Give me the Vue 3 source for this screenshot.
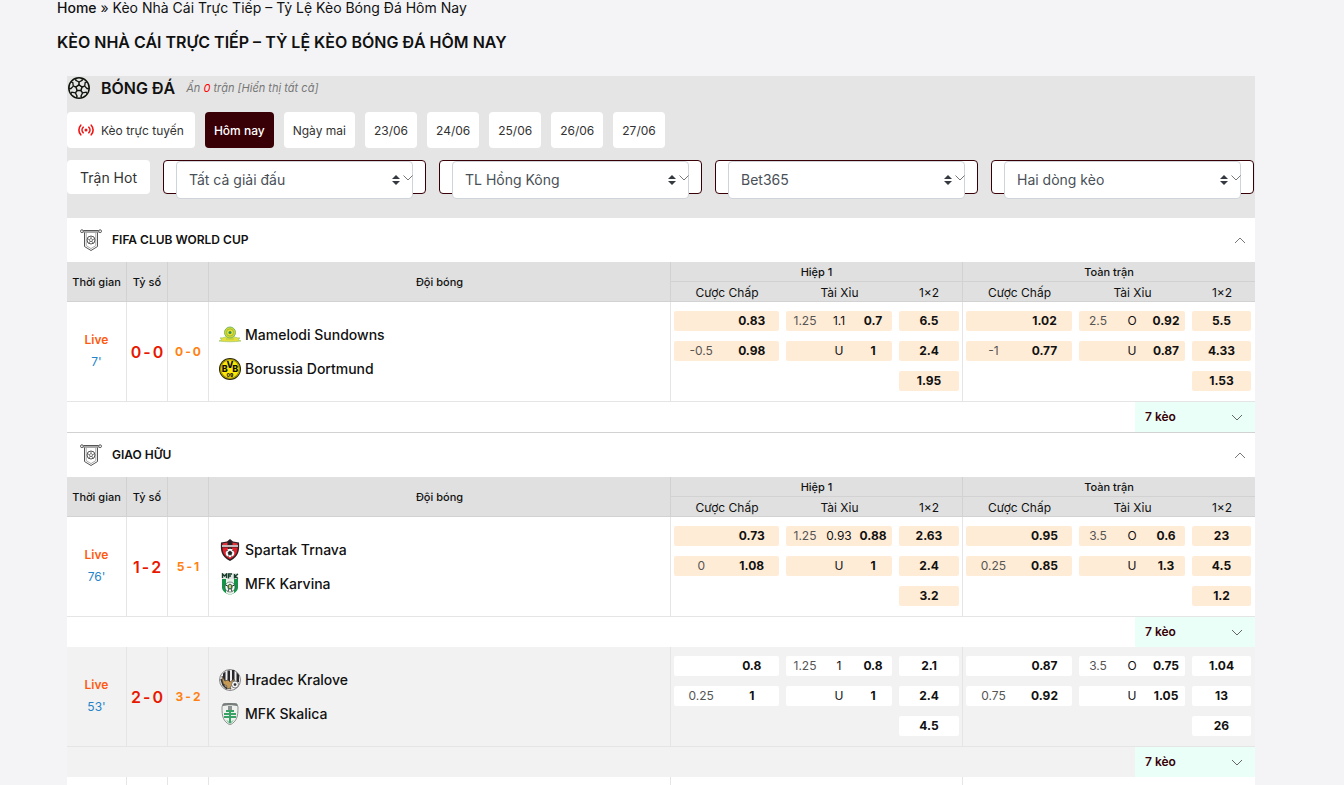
<template>
  <div class="page">
    <nav class="breadcrumb" aria-label="Breadcrumb">
      <a href="#" class="crumb-home">Home</a> » <span>Kèo Nhà Cái Trực Tiếp – Tỷ Lệ Kèo Bóng Đá Hôm Nay</span>
    </nav>
    <h1 class="page-title">KÈO NHÀ CÁI TRỰC TIẾP – TỶ LỆ KÈO BÓNG ĐÁ HÔM NAY</h1>

    <main class="board">
      <div class="toolbar">
        <div class="sport">
          <svg class="sport-icon" viewBox="0 0 24 24" fill="none" stroke="#10150c" stroke-width="1.5">
            <circle cx="12" cy="12" r="10.2" />
            <path d="M12 8.800l3 2.200-1.100 3.600h-3.800L9 11z" />
            <path d="M12 8.800V6M15 11l2.700-.9M13.900 14.600l1.700 2.300M10.100 14.600l-1.700 2.300M9 11l-2.700-.9" />
            <path d="M12 6L8.800 4.400V2.300M12 6l3.200-1.600V2.300M17.700 10.100l.5-3.600 2-.6M17.700 10.100l2.500 2.600 1.800-.5M15.600 16.900l3.600-.7 1.200 1.600M15.600 16.900l-1.700 3.200 1.200 1.700M8.400 16.900l1.700 3.200-1.200 1.700M8.400 16.900l-3.600-.7-1.200 1.600M6.300 10.100l-2.500 2.600-1.800-.5M6.300 10.100l-.5-3.600-2-.6" stroke-width="1.300" />
          </svg>
          <h2 class="sport-name">BÓNG ĐÁ</h2>
          <p class="hidden-note">Ẩn <span class="red">0</span> trận [Hiển thị tất cả]</p>
        </div>

        <div class="days">
          <button
            v-for="day in days"
            :key="day"
            type="button"
            class="day"
            :class="{ 'day-active': day === activeDay, 'day-live': day === days[0] }"
            @click="activeDay = day"
          >
            <svg v-if="day === days[0]" class="live-icon" viewBox="0 0 16 12" fill="none" stroke="#f01414" stroke-width="1.6" stroke-linecap="round">
              <circle cx="8" cy="6" r="1.5" fill="#f01414" stroke="none" />
              <path d="M5.200 3.200a4 4 0 0 0 0 5.600M10.800 3.200a4 4 0 0 1 0 5.600M2.800 1.200a7 7 0 0 0 0 9.600M13.200 1.200a7 7 0 0 1 0 9.600" />
            </svg>
            {{ day }}
          </button>
        </div>

        <div class="filters">
          <button type="button" class="hot">Trận Hot</button>
          <div v-for="filter in filters" :key="filter" class="filter">
            <select class="filter-select" :aria-label="filter">
              <option>{{ filter }}</option>
            </select>
            <svg class="filter-arrows" viewBox="0 0 8 10" fill="#343a40">
              <path d="M4 0l4 4H0zM4 10l4-4H0z" />
            </svg>
            <svg class="filter-chevron" viewBox="0 0 10 6" fill="none" stroke="#777">
              <path d="M.5.5L5 5 9.500 .5" />
            </svg>
          </div>
        </div>
      </div>

      <section v-for="league in leagues" :key="league.name" class="league">
        <header class="league-head">
          <svg class="league-icon" viewBox="0 0 22 22" fill="none" stroke="#555">
            <circle cx="1.900" cy="2.200" r="1.400" />
            <circle cx="20.100" cy="2.200" r="1.400" />
            <path d="M3.300 1.500h15.400M3.300 3h15.400M4.500 3.500v14l6.500 4 6.500-4v-14" />
            <path d="M6.200 4v12.600l4.800 3 4.800-3V4" stroke="#aaa" />
            <circle cx="11" cy="11" r="4" />
            <path d="M11 9.400l1.600 1.200-.6 1.900h-2l-.6-1.900zM11 7.500v1.900M12.600 10.600l2-.8M12 12.500l1.200 1.700M10 12.500l-1.200 1.700M9.400 10.600l-2-.8" stroke-width=".8" />
          </svg>
          <h3 class="league-name">{{ league.name }}</h3>
          <button type="button" class="collapse" aria-label="Thu gọn" @click="league.open = !league.open">
            <svg class="chevron" :class="{ flipped: !league.open }" viewBox="0 0 12 7" fill="none" stroke="#777">
              <path d="M1 6l5-5 5 5" />
            </svg>
          </button>
        </header>

        <table v-if="league.open" class="odds-table">
          <colgroup>
            <col class="col-time">
            <col class="col-score">
            <col class="col-score">
            <col>
            <col class="col-hdp-first">
            <col class="col-odds">
            <col class="col-last-first">
            <col class="col-odds">
            <col class="col-odds">
            <col class="col-last">
          </colgroup>
          <thead>
            <tr>
              <th rowspan="2" class="line low">Thời gian</th>
              <th rowspan="2" class="line low">Tỷ số</th>
              <th rowspan="2" class="line low"></th>
              <th rowspan="2" class="line low">Đội bóng</th>
              <th colspan="3" class="line low group">Hiệp 1</th>
              <th colspan="3" class="low group">Toàn trận</th>
            </tr>
            <tr class="sub-head">
              <th class="low">Cược Chấp</th>
              <th class="low">Tài Xỉu</th>
              <th class="line low">1×2</th>
              <th class="low">Cược Chấp</th>
              <th class="low">Tài Xỉu</th>
              <th class="low">1×2</th>
            </tr>
          </thead>
          <tbody v-for="match in league.matches" :key="match.home" :class="{ alt: match.alt }">
            <tr class="match">
              <td class="line time">
                <div class="live">Live</div>
                <div class="minute">{{ match.minute }}'</div>
              </td>
              <td class="line">
                <div class="score"><span>{{ match.score[0] }}</span><span>-</span><span>{{ match.score[1] }}</span></div>
              </td>
              <td class="line">
                <div class="score corners"><span>{{ match.corners[0] }}</span><span>-</span><span>{{ match.corners[1] }}</span></div>
              </td>
              <td class="line teams">
                <div v-for="team in [match.home, match.away]" :key="team" class="team">
                  <svg v-if="team === 'Mamelodi Sundowns'" class="logo" viewBox="0 0 22 22">
                    <path d="M0 17l3-1.500-2-1.500c4 0 6-1 8-3h4c2 2 4 3 8 3l-2 1.500 3 1.500c-7 1-15 1-22 0z" fill="#e4df3c" stroke="#9cc56c" stroke-width=".7" />
                    <circle cx="11" cy="8.500" r="5.500" fill="#d6d92d" stroke="#79b86a" />
                    <circle cx="11" cy="8.500" r="3.600" fill="#eadf31" stroke="#8cb83c" stroke-width=".8" />
                    <circle cx="11" cy="8.500" r="1.500" fill="#278b62" />
                    <path d="M7 15h8" stroke="#b5c93c" />
                  </svg>
                  <svg v-else-if="team === 'Borussia Dortmund'" class="logo" viewBox="0 0 22 22">
                    <circle cx="11" cy="11" r="11" fill="#2b2705" />
                    <circle cx="11" cy="11" r="10" fill="#fbe70a" />
                    <circle cx="11" cy="11" r="9.300" fill="none" stroke="#2b2705" stroke-width=".5" />
                    <g class="logo-text" fill="#111" text-anchor="middle">
                      <text x="5.700" y="14.200" font-size="9">B</text>
                      <text x="11" y="9.800" font-size="9">V</text>
                      <text x="16.300" y="14.200" font-size="9">B</text>
                      <text x="11" y="19" font-size="5">09</text>
                    </g>
                  </svg>
                  <svg v-else-if="team === 'Spartak Trnava'" class="logo" viewBox="0 0 22 22">
                    <path d="M2 3.500l6-1L11 0l3 2.500 6 1c.5 8 0 14-9 18.500C2 17.500 1.500 11.500 2 3.500z" fill="#2c2225" />
                    <path d="M3.500 8.500h15c0 6-2.500 9-7.500 11.700C6 17.500 3.500 14.500 3.500 8.500z" fill="#e3212c" />
                    <path d="M3.500 4.500l5-1v4h-5zM13.500 3.500l5 1v3h-5z" fill="#e3343c" />
                    <path d="M3 6h16v2H3z" fill="#c8b9ba" />
                    <path d="M9 8.500h4V12H9z" fill="#222" />
                    <circle cx="11" cy="14" r="4.300" fill="#fff" />
                    <path d="M11 12l2 1.500-.8 2.300H9.800L9 13.500zM7 12l1.800-.6M15 12l-1.800-.6M9 18l.5-1.300M13 18l-.5-1.300" fill="#222" stroke="#222" stroke-width=".8" />
                  </svg>
                  <svg v-else-if="team === 'MFK Karvina'" class="logo" viewBox="0 0 22 22">
                    <path d="M3 6h16v8c0 4-3 6-8 8-5-2-8-4-8-8z" fill="#149447" />
                    <path d="M7 6h8v14l-4 2-4-2z" fill="#e9f2e9" />
                    <path d="M3 0h16v6H3z" fill="#dfe5e1" />
                    <path d="M3.500 5V1l2 2 2-2v4M9.500 5.500V1H13M9.500 3H12M15.500 1v4.500M19 1l-3 2.200 3 2.300" fill="none" stroke="#173d2a" stroke-width="1.400" />
                    <circle cx="11" cy="14" r="5" fill="#fff" stroke="#25483a" stroke-width=".6" />
                    <path d="M11 10.500l3 2-1 4h-4l-1-4z" fill="#3c7252" />
                    <path d="M10 12h2v3h-2z" fill="#d4c46a" />
                    <path d="M6.500 12l1.500.7M15.500 12l-1.500.7M9 18.500l.5-2M13 18.500l-.5-2" stroke="#222" />
                  </svg>
                  <svg v-else-if="team === 'Hradec Kralove'" class="logo" viewBox="0 0 22 22">
                    <circle cx="11" cy="11" r="10.500" fill="#eee" stroke="#888" />
                    <path d="M4 4.500l2.500-2V16L4 17zM8.500 1.500H11V13H8.500zM13 1h2.500v12H13zM17.500 3L20 6v7h-2.500z" fill="#29272b" />
                    <path d="M3 7l3 5 3-1 2 2 4-3c0 5-2 7-4 8l1 2-5-1 1-2-4-2z" fill="#c69a54" stroke="#4b4034" stroke-width=".7" />
                    <circle cx="16" cy="15.500" r="3.500" fill="#f5f5f5" stroke="#555" stroke-width=".7" />
                    <path d="M16 14l1.500 1-.5 1.700h-2l-.5-1.700z" fill="#333" />
                    <path d="M2 10l2 6 4 4" fill="none" stroke="#333" stroke-width="1.500" />
                  </svg>
                  <svg v-else class="logo" viewBox="0 0 22 22">
                    <path d="M4 1c4-1.200 10-1.200 14 0l1 3c0 10-1 14-8 18C4 18 3 14 3 4z" fill="#eef1ee" stroke="#8b918e" />
                    <path d="M4 1c4-1.200 10-1.200 14 0v2c-4-1-10-1-14 0z" fill="#777d7b" />
                    <path d="M11 5v15M7 8h8M5 11h12M5 14h12" stroke="#3aa267" stroke-width="2" />
                    <path d="M8 17.500l3 3 3-3" fill="none" stroke="#55aa78" />
                    <path d="M9 3h4v4H9z" fill="#8c9390" />
                  </svg>
                  <span>{{ team }}</span>
                </div>
              </td>
              <template v-for="(half, i) in [match.first, match.full]" :key="i">
                <td class="odds">
                  <div v-for="(row, r) in half.handicap" :key="r" class="chip">
                    <span class="ratio">{{ row[0] }}</span>
                    <b>{{ row[1] }}</b>
                  </div>
                </td>
                <td class="odds">
                  <div v-for="(row, r) in half.total" :key="r" class="chip">
                    <span class="ratio">{{ row[0] }}</span>
                    <span>{{ row[1] }}</span>
                    <b>{{ row[2] }}</b>
                  </div>
                </td>
                <td class="odds" :class="{ 'line odds-end': i === 0 }">
                  <div v-for="(value, r) in half.win" :key="r" class="chip">
                    <b>{{ value }}</b>
                  </div>
                </td>
              </template>
            </tr>
            <tr>
              <td colspan="10">
                <button type="button" class="more">
                  7 kèo
                  <svg class="chevron flipped" viewBox="0 0 12 7" fill="none" stroke="#666">
                    <path d="M1 6l5-5 5 5" />
                  </svg>
                </button>
              </td>
            </tr>
          </tbody>
          <tbody v-if="league.hasNext">
            <tr class="next-row">
              <td class="line"></td>
              <td class="line"></td>
              <td class="line"></td>
              <td class="line"></td>
              <td colspan="3" class="line"></td>
              <td colspan="3"></td>
            </tr>
          </tbody>
        </table>
      </section>
    </main>
  </div>
</template>

<script setup>
import { ref } from 'vue'

const days = ['Kèo trực tuyến', 'Hôm nay', 'Ngày mai', '23/06', '24/06', '25/06', '26/06', '27/06']
const activeDay = ref('Hôm nay')

const filters = ['Tất cả giải đấu', 'TL Hồng Kông', 'Bet365', 'Hai dòng kèo']

const leagues = ref([
  {
    name: 'FIFA CLUB WORLD CUP',
    open: true,
    matches: [
      {
        minute: 7,
        score: [0, 0],
        corners: [0, 0],
        home: 'Mamelodi Sundowns',
        away: 'Borussia Dortmund',
        first: {
          handicap: [['', '0.83'], ['-0.5', '0.98']],
          total: [['1.25', '1.1', '0.7'], ['', 'U', '1']],
          win: ['6.5', '2.4', '1.95']
        },
        full: {
          handicap: [['', '1.02'], ['-1', '0.77']],
          total: [['2.5', 'O', '0.92'], ['', 'U', '0.87']],
          win: ['5.5', '4.33', '1.53']
        }
      }
    ]
  },
  {
    name: 'GIAO HỮU',
    open: true,
    hasNext: true,
    matches: [
      {
        minute: 76,
        score: [1, 2],
        corners: [5, 1],
        home: 'Spartak Trnava',
        away: 'MFK Karvina',
        first: {
          handicap: [['', '0.73'], ['0', '1.08']],
          total: [['1.25', '0.93', '0.88'], ['', 'U', '1']],
          win: ['2.63', '2.4', '3.2']
        },
        full: {
          handicap: [['', '0.95'], ['0.25', '0.85']],
          total: [['3.5', 'O', '0.6'], ['', 'U', '1.3']],
          win: ['23', '4.5', '1.2']
        }
      },
      {
        minute: 53,
        alt: true,
        score: [2, 0],
        corners: [3, 2],
        home: 'Hradec Kralove',
        away: 'MFK Skalica',
        first: {
          handicap: [['', '0.8'], ['0.25', '1']],
          total: [['1.25', '1', '0.8'], ['', 'U', '1']],
          win: ['2.1', '2.4', '4.5']
        },
        full: {
          handicap: [['', '0.87'], ['0.75', '0.92']],
          total: [['3.5', 'O', '0.75'], ['', 'U', '1.05']],
          win: ['1.04', '13', '26']
        }
      }
    ]
  }
])
</script>

<style>
body {
  margin: 0;
  background: #f4f4f7;
}
</style>

<style scoped>
.page {
  padding: 0 79px 0 57px;
  font-family: Inter, "Liberation Sans", sans-serif;
  font-size: 14px;
  color: #111;
}

button,
select {
  font-family: inherit;
  cursor: pointer;
}

button {
  border: 0;
  padding: 0;
  background: none;
}

.breadcrumb {
  line-height: 16px;
}

.crumb-home {
  color: inherit;
  font-weight: 500;
  text-decoration: none;
}

.page-title {
  margin: 16px 0 24px;
  font-size: 16px;
  font-weight: 600;
  line-height: 20px;
}

.board {
  margin: 0 10px;
  background: #fff;
}

.toolbar {
  padding-bottom: 24px;
  background: #e5e5e5;
}

.sport {
  display: flex;
  align-items: center;
  height: 24px;
}

.sport-icon {
  width: 24px;
  height: 24px;
}

.sport-name {
  margin: 0 11px 0 10px;
  font-size: 16px;
  font-weight: 600;
}

.hidden-note {
  margin: 0;
  font-size: 11px;
  font-style: italic;
  color: #777;
}

.red {
  color: #f00;
}

.days {
  display: flex;
  gap: 10px;
  margin-top: 12px;
}

.day {
  display: flex;
  align-items: center;
  height: 36px;
  padding: 0 9px;
  border-radius: 4px;
  background: #fff;
  color: #333;
  font-size: 12px;
}

.day-live {
  padding: 0 11px;
}

.day-active {
  background: #380006;
  color: #fff;
  font-weight: 500;
}

.live-icon {
  width: 16px;
  height: 12px;
  margin-right: 7px;
}

.filters {
  display: flex;
  gap: 13px;
  margin-top: 12px;
  padding-right: 1px;
}

.hot {
  height: 34px;
  padding: 0 13px;
  border-radius: 4px;
  background: #fff;
  color: #333;
  font-size: 14px;
}

.filter {
  position: relative;
  flex: 1;
  box-sizing: border-box;
  height: 34px;
  padding: 0 12px;
  border: 1px solid #380006;
  border-radius: 4px;
  background: #fff;
}

.filter-select {
  width: 100%;
  height: 38px;
  padding: 0 12px 2px;
  border: 1px solid #ced4da;
  border-radius: 4px;
  background: #fff;
  color: #495057;
  font-size: 14px;
  appearance: none;
}

.filter-arrows,
.filter-chevron {
  position: absolute;
  pointer-events: none;
}

.filter-arrows {
  top: 14px;
  right: 25px;
  width: 8px;
  height: 10px;
}

.filter-chevron {
  top: 14px;
  right: 12px;
  width: 10px;
  height: 6px;
}

.league + .league {
  border-top: 1px solid #d2d2d2;
}

.league-head {
  display: flex;
  align-items: center;
  height: 44px;
  padding: 0 9px 0 13px;
}

.league-icon {
  width: 22px;
  height: 22px;
}

.league-name {
  flex: 1;
  margin: 0 0 0 10px;
  font-size: 12px;
  font-weight: 600;
  line-height: 16px;
}

.collapse {
  display: flex;
}

.chevron {
  width: 12px;
  height: 7px;
}

.flipped {
  transform: rotate(180deg);
}

.odds-table {
  width: 100%;
  table-layout: fixed;
  border-collapse: separate;
  border-spacing: 0;
}

.col-time {
  width: 60px;
}

.col-score {
  width: 41px;
}

.col-hdp-first {
  width: 112px;
}

.col-odds {
  width: 113px;
}

.col-last-first {
  width: 67px;
}

.col-last {
  width: 66px;
}

th {
  padding: 0;
  background: #e0e0e0;
  font-size: 11px;
  font-weight: 500;
  line-height: 18px;
}

.group {
  padding-top: 1px;
}

.sub-head th {
  padding-top: 2px;
  font-size: 12px;
  font-weight: 400;
  line-height: 17px;
}

td {
  padding: 0;
}

.line {
  border-right: 1px solid #e5e5e5;
}

th.line {
  border-right-color: #d2d2d2;
}

.low {
  border-bottom: 1px solid #d2d2d2;
}

.match td {
  border-bottom: 1px solid #e5e5e5;
}

.alt {
  background: #f2f2f2;
}

.match .time {
  padding-bottom: 2px;
  text-align: center;
  font-size: 12px;
  line-height: 22px;
}

.live {
  color: #ff5a12;
  font-weight: 600;
}

.minute {
  color: #2584c9;
}

.score {
  display: flex;
  justify-content: center;
  gap: 2px;
  color: #e81700;
  font-size: 16px;
  font-weight: 600;
  line-height: 20px;
}

.corners {
  color: #ff8114;
  font-size: 12px;
  font-weight: 700;
}

.teams {
  padding: 0 10px;
}

.team {
  display: flex;
  align-items: center;
  gap: 4px;
  height: 34px;
  font-size: 14px;
  font-weight: 500;
}

.logo {
  width: 22px;
  height: 22px;
}

.logo-text {
  font-weight: 800;
}

.odds {
  padding: 9px 4px 10px 3px;
  vertical-align: top;
}

.odds-end {
  padding-right: 3px;
}

.chip {
  display: flex;
  box-sizing: border-box;
  height: 20px;
  padding: 0 2px;
  border-radius: 2px;
  background: #ffecd6;
  font-size: 12px;
  line-height: 20px;
  text-align: center;
}

.chip + .chip {
  margin-top: 10px;
}

.chip > * {
  flex: 1 1 0;
  min-width: 0;
}

.chip b {
  font-weight: 700;
}

.alt .chip {
  background: #fff;
}

.ratio {
  color: #555;
}

.more {
  display: flex;
  align-items: center;
  justify-content: space-between;
  width: 120px;
  height: 30px;
  margin-left: auto;
  padding: 0 12px 0 10px;
  background: #ebfff9;
  color: #380006;
  font-size: 12px;
  font-weight: 600;
  line-height: 16px;
}

.next-row td {
  height: 8px;
}
</style>
